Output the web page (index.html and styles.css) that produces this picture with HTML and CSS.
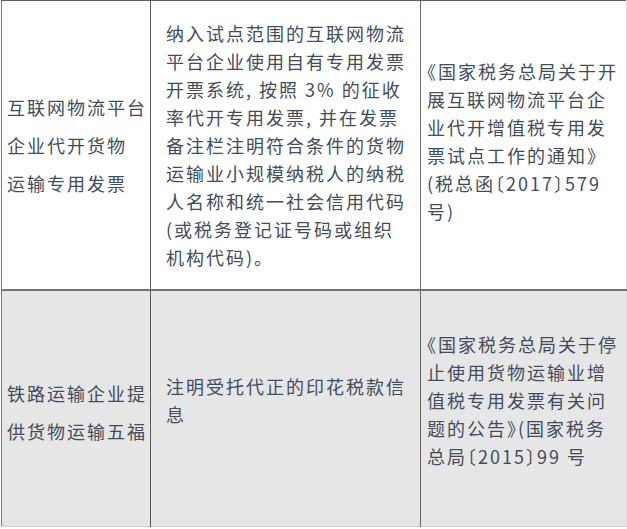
FILE: index.html
```html
<!DOCTYPE html>
<html lang="zh">
<head>
<meta charset="utf-8">
<link rel="stylesheet" href="styles.css">
</head>
<body>
<table class="tax">
  <tr class="row-a">
    <td class="c1">互联网物流平台<br>企业代开货物<br>运输专用发票</td>
    <td class="c2">纳入试点范围的互联网物流<br>平台企业使用自有专用发票<br>开票系统, 按照 3% 的征收<br>率代开专用发票, 并在发票<br>备注栏注明符合条件的货物<br>运输业小规模纳税人的纳税<br>人名称和统一社会信用代码<br>(或税务登记证号码或组织<br>机构代码)。</td>
    <td class="c3 up">《国家税务总局关于开<br>展互联网物流平台企<br>业代开增值税专用发<br>票试点工作的通知》<br>(税总函〔2017〕579<br>号)</td>
  </tr>
  <tr class="row-b">
    <td class="c1 low">铁路运输企业提<br>供货物运输五福</td>
    <td class="c2 up2">注明受托代正的印花税款信<br>息</td>
    <td class="c3 up2">《国家税务总局关于停<br>止使用货物运输业增<br>值税专用发票有关问<br>题的公告》(国家税务<br>总局〔2015〕99 号</td>
  </tr>
</table>
</body>
</html>
```
FILE: styles.css
```css
html, body {
  margin: 0;
  padding: 0;
  background: #ffffff;
}
body {
  width: 627px;
  height: 529px;
  overflow: hidden;
}
.tax {
  margin-left: 1px;
  border-collapse: collapse;
  width: 626px;
  table-layout: fixed;
  font-family: "Noto Sans CJK SC", "Noto Sans", sans-serif;
  font-size: 18px;
  letter-spacing: 2px;
  font-feature-settings: "halt";
  color: #434c5a;
  border-top: 1px solid #5e5e5e;
  border-left: 1px solid #7a7a7a;
  border-right: 1px solid #dcdcdc;
  border-bottom: 1px solid #d0d0d0;
}
.tax td {
  vertical-align: middle;
  padding: 0;
  line-height: 28px;
  white-space: nowrap;
}
.row-a { height: 289px; }
.row-b {
  height: 237px;
  background: #e6e6e7;
  border-top: 2px solid #737373;
}
.c1 {
  width: 143px;
  padding-left: 5px !important;
  line-height: 38px !important;
  border-right: 1px solid #5a5a5a;
}
.c2 {
  width: 254px;
  padding-left: 15px !important;
  border-right: 1px solid #6a6a6a;
}
.c3 {
  padding-left: 6px !important;
}
.up { padding-bottom: 7px !important; }
.up2 { padding-bottom: 16px !important; }
.low { padding-top: 8px !important; }
```
